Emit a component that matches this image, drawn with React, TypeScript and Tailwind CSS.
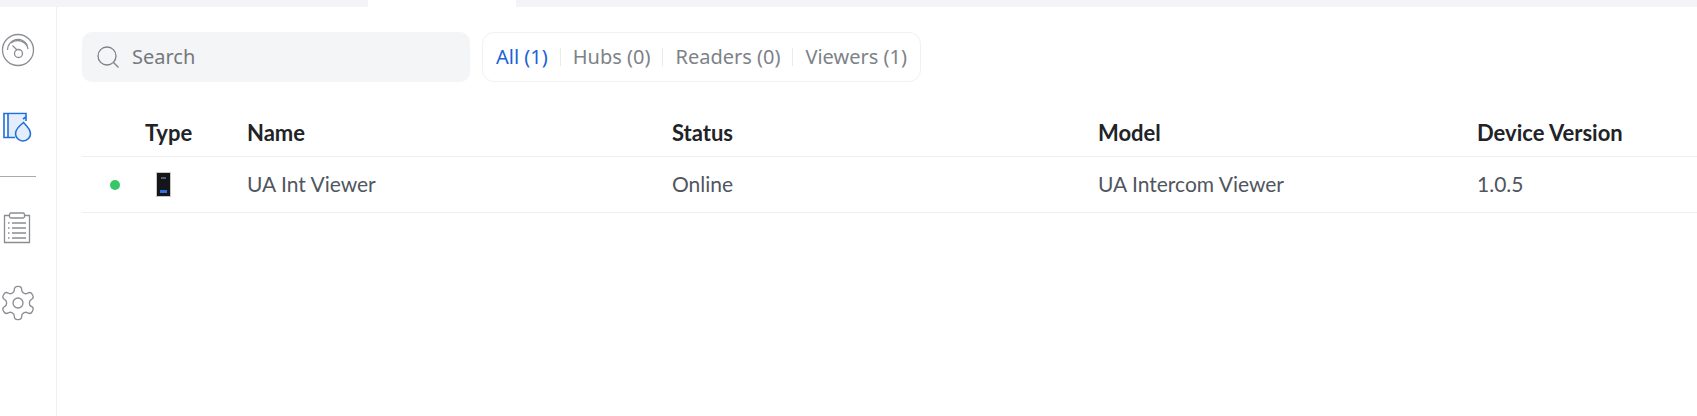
const tableCols = 'grid grid-cols-[63px_102px_425px_426px_379px_1fr] items-center'

function DoorIcon() {
  return (
    <svg width="34" height="34" viewBox="0 0 34 34" fill="none" stroke="#8a8d91" strokeWidth="1.300">
      <circle cx="17" cy="17" r="15.500" />
      <path d="M6.500 17a10.500 10.500 0 0 1 20-4.500" />
      <path d="M10 10a10.500 10.500 0 0 1 17 6" />
      <path d="M11.500 12.500l4.500 4.500" />
      <circle cx="17.500" cy="20.500" r="4" />
    </svg>
  )
}

function AccessIcon() {
  return (
    <svg width="31" height="31" viewBox="0 0 31 31" fill="none" stroke="#1f6fdc" strokeWidth="1.600">
      <rect x="5" y="3" width="17" height="22" fill="#e3edfb" stroke="none" />
      <path d="M23 9V1.500H1V25.500H12" />
      <path d="M5 2v23" />
      <path d="M23 5l-3 2" />
      <path d="M20.500 10.500c4 4 7 7 7 11a7.500 7.500 0 0 1-15 0c0-4 3-7 8-11z" fill="#e3edfb" />
    </svg>
  )
}

function ListIcon() {
  return (
    <svg width="28" height="32" viewBox="0 0 28 32" fill="none" stroke="#8a8d91" strokeWidth="1.300">
      <path d="M7 3.500H1.500v27h25v-27H21" />
      <rect x="6.500" y="1" width="15" height="5" rx="1.500" />
      <path d="M9 11h14M9 16h14M9 21h14M9 26h14" />
      <path d="M5 11h1.500M5 16h1.500M5 21h1.500M5 26h1.500" />
    </svg>
  )
}

function GearIcon() {
  return (
    <svg width="40" height="40" viewBox="0 0 24 24" fill="none" stroke="#8a8d91" strokeWidth="0.800" strokeLinejoin="round">
      <path d="M12.220 2h-.440a2 2 0 0 0-2 2v.180a2 2 0 0 1-1 1.730l-.430.250a2 2 0 0 1-2 0l-.150-.080a2 2 0 0 0-2.730.730l-.220.380a2 2 0 0 0 .730 2.730l.150.100a2 2 0 0 1 1 1.720v.510a2 2 0 0 1-1 1.740l-.150.090a2 2 0 0 0-.730 2.730l.220.380a2 2 0 0 0 2.730.730l.150-.080a2 2 0 0 1 2 0l.430.250a2 2 0 0 1 1 1.730V20a2 2 0 0 0 2 2h.440a2 2 0 0 0 2-2v-.180a2 2 0 0 1 1-1.730l.430-.250a2 2 0 0 1 2 0l.150.080a2 2 0 0 0 2.730-.730l.220-.390a2 2 0 0 0-.730-2.730l-.150-.080a2 2 0 0 1-1-1.740v-.500a2 2 0 0 1 1-1.740l.150-.090a2 2 0 0 0 .730-2.730l-.220-.380a2 2 0 0 0-2.730-.730l-.150.080a2 2 0 0 1-2 0l-.430-.250a2 2 0 0 1-1-1.730V4a2 2 0 0 0-2-2z" />
      <circle cx="12" cy="12" r="3" />
    </svg>
  )
}

function SearchIcon() {
  return (
    <svg width="24" height="24" viewBox="0 0 24 24" fill="none" stroke="#7d8186" strokeWidth="1.300">
      <circle cx="11" cy="11" r="9" />
      <path d="M17.500 17.500l5 5" />
    </svg>
  )
}

function ViewerThumb() {
  return (
    <div className="flex h-[25px] w-[15px] flex-col items-center justify-between rounded-[1px] border border-[#c9c7c0] bg-[#14161c] pt-[4px] pb-[3px]">
      <span className="h-[2px] w-[5px] bg-[#5a5d66]" />
      <span className="h-[3px] w-[7px] bg-[#2f6fe0]" />
    </div>
  )
}

const filters = ['All (1)', 'Hubs (0)', 'Readers (0)', 'Viewers (1)']

export default function App() {
  return (
    <div className="flex h-[416px] w-[1697px] flex-col overflow-hidden bg-white font-['Lato',sans-serif]">
      {/* Top tab strip */}
      <div className="flex h-[7px] shrink-0">
        <div className="w-[368px] bg-[#f4f4f8]" />
        <div className="w-[148px] bg-white" />
        <div className="flex-1 bg-[#f4f4f8]" />
      </div>

      <div className="flex flex-1">
        {/* Sidebar */}
        <aside className="flex w-[57px] shrink-0 flex-col border-r border-[#eeeff1]">
          <div className="mt-[26px] pl-[1px]">
            <DoorIcon />
          </div>
          <div className="mt-[45px] pl-[3px]">
            <AccessIcon />
          </div>
          <div className="mt-[33px] h-px w-[36px] bg-[#a9abae]" />
          <div className="mt-[35px] pl-[3px]">
            <ListIcon />
          </div>
          <div className="mt-[39px] -ml-[2px]">
            <GearIcon />
          </div>
        </aside>

        {/* Main content */}
        <main className="flex-1 pt-[25px] pl-[25px]">
          <div className="flex gap-[12px]">
            <div className="flex h-[50px] w-[388px] items-center gap-[12px] rounded-[10px] bg-[#f3f5f7] pl-[14px]">
              <SearchIcon />
              <span className="font-['Noto_Sans',sans-serif] text-[20px] text-[#75787c]">Search</span>
            </div>
            <div className="flex h-[50px] w-[439px] items-center rounded-[12px] border border-[#f0f1f3] pl-[13px] font-['Noto_Sans',sans-serif] text-[20px] text-[#7d8288]">
              {filters.map((label, i) => (
                <div key={label} className="flex items-center">
                  {i > 0 && <span className="mx-[12px] h-[18px] w-px bg-[#e8eaec]" />}
                  <span className={i === 0 ? 'text-[#1a62d6]' : ''}>{label}</span>
                </div>
              ))}
            </div>
          </div>

          <div className={`${tableCols} mt-[25px] h-[50px] border-b border-[#eeeff1] pt-[1px] text-[22px] font-bold text-[#212327]`}>
            <span />
            <span>Type</span>
            <span>Name</span>
            <span>Status</span>
            <span>Model</span>
            <span>Device Version</span>
          </div>
          <div className={`${tableCols} h-[56px] border-b border-[#eeeff1] pb-[2px] text-[21px] text-[#50565e]`}>
            <span className="mt-[2px] ml-[28px] h-[10px] w-[10px] rounded-full bg-[#38c766]" />
            <span className="mt-[2px] ml-[11px]">
              <ViewerThumb />
            </span>
            <span>UA Int Viewer</span>
            <span>Online</span>
            <span>UA Intercom Viewer</span>
            <span>1.0.5</span>
          </div>
        </main>
      </div>
    </div>
  )
}
